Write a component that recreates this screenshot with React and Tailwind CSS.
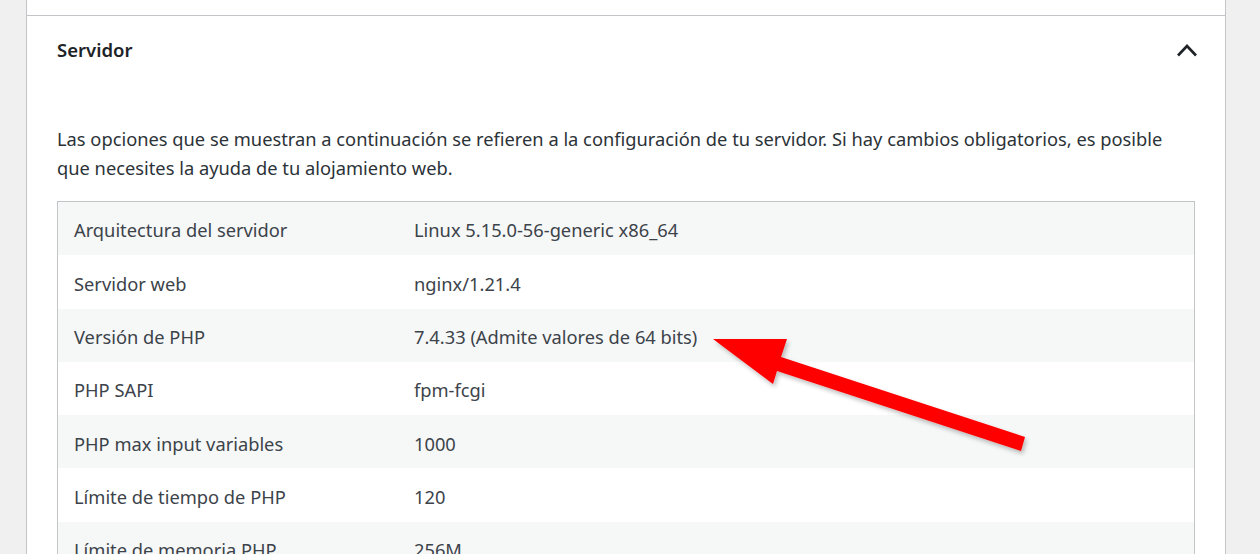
import React from 'react'

const ROWS = [
  ['Arquitectura del servidor', 'Linux 5.15.0-56-generic x86_64'],
  ['Servidor web', 'nginx/1.21.4'],
  ['Versión de PHP', '7.4.33 (Admite valores de 64 bits)'],
  ['PHP SAPI', 'fpm-fcgi'],
  ['PHP max input variables', '1000'],
  ['Límite de tiempo de PHP', '120'],
  ['Límite de memoria PHP', '256M'],
]

function Chevron() {
  return (
    <svg width="22" height="14" viewBox="0 0 22 14" fill="none" stroke="#1d2327" strokeWidth="2.6">
      <polyline points="2,12.5 11,3 20,12.5" />
    </svg>
  )
}

function Arrow() {
  return (
    <svg className="absolute left-0 top-0 pointer-events-none" width="1260" height="554" viewBox="0 0 1260 554">
      <defs>
        <filter id="sh" x="-10%" y="-10%" width="130%" height="140%">
          <feDropShadow dx="2" dy="3" stdDeviation="2" floodColor="#000" floodOpacity="0.25" />
        </filter>
      </defs>
      <polygon
        filter="url(#sh)"
        fill="#ff0000"
        points="713,339 787,339 781,357 1025,437 1021,451 777,371 773,384"
      />
    </svg>
  )
}

export default function App() {
  return (
    <div className="relative h-[554px] overflow-hidden bg-[#f0f0f1] pl-[26px] pr-[34px]" style={{ fontFamily: '"Noto Sans", "Open Sans", sans-serif' }}>
      <div className="h-full bg-white border-x border-[#c3c4c7]">
        {/* previous section */}
        <div className="h-[16px] border-b border-[#c3c4c7]" />

        {/* header */}
        <div className="h-[68px] flex items-center justify-between pl-[30px] pr-[27px]">
          <h2 className="text-[18.5px] font-semibold text-[#1d2327]">Servidor</h2>
          <Chevron />
        </div>

        <div className="px-[30px] pt-[40px]">
          <p className="text-[18.3px] leading-[29px] text-[#2c3338]">
            Las opciones que se muestran a continuación se refieren a la configuración de tu servidor. Si hay cambios obligatorios, es posible que necesites la ayuda de tu alojamiento web.
          </p>

          <div className="mt-[19px] border border-[#c3c4c7] text-[18.3px] text-[#3c434a]">
            {ROWS.map(([label, value], i) => (
              <div
                key={label}
                className={`grid grid-cols-[340px_1fr] h-[53.3px] items-center pt-[3px] ${i % 2 === 0 ? 'bg-[#f6f7f7]' : 'bg-white'}`}
              >
                <div className="px-4">{label}</div>
                <div className="px-4">{value}</div>
              </div>
            ))}
          </div>
        </div>
      </div>
      <Arrow />
    </div>
  )
}
